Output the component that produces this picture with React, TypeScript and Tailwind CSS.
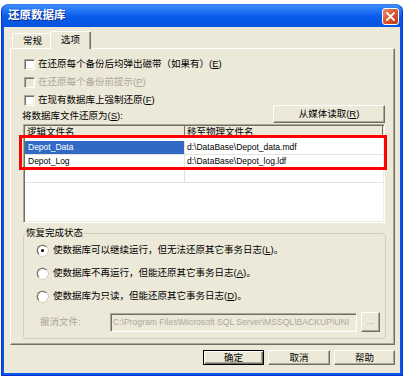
import type { ReactNode } from "react";

const font = "font-['Liberation_Sans','Noto_Sans_CJK_SC',sans-serif]";

// classic 3D edges
const raised =
  "border border-t-white border-l-white border-b-[#716F64] border-r-[#716F64] shadow-[inset_-1px_-1px_0_#ACA899]";
const sunken =
  "border border-t-[#ACA899] border-l-[#ACA899] border-b-white border-r-white shadow-[inset_1px_1px_0_#716F64,inset_-1px_-1px_0_#F1EFE2]";

function Check({ disabled }: { disabled?: boolean }) {
  return (
    <span
      className={`w-[11px] h-[11px] shrink-0 ${sunken} ${disabled ? "bg-[#ECE9D8]" : "bg-white"}`}
    />
  );
}

function Radio({ on }: { on?: boolean }) {
  return (
    <span className="relative w-[11px] h-[11px] shrink-0 rounded-full bg-white border border-t-[#716F64] border-l-[#716F64] border-b-white border-r-white shadow-[0_0_0_0.5px_#ACA899] flex items-center justify-center">
      {on && <span className="w-[3px] h-[3px] rounded-full bg-black" />}
    </span>
  );
}

function Btn({
  children,
  def,
  disabled,
  className = "",
}: {
  children: ReactNode;
  def?: boolean;
  disabled?: boolean;
  className?: string;
}) {
  return (
    <button
      className={`flex items-center justify-center bg-[#ECE9D8] text-[9.5px] leading-none ${
        def
          ? "border border-black shadow-[inset_1px_1px_0_white,inset_-1px_-1px_0_#716F64,inset_-2px_-2px_0_#ACA899]"
          : raised
      } ${disabled ? "text-[#ACA899]" : "text-black"} ${className}`}
    >
      {children}
    </button>
  );
}

const Key = ({ k }: { k: string }) => (
  <>
    (<u className="underline-offset-1">{k}</u>)
  </>
);

export default function App() {
  return (
    <div className={`w-[405px] h-[377px] bg-white pt-[4px] pl-[1px] overflow-hidden ${font}`}>
      <div className="w-[402px] h-[372px] flex flex-col rounded-t-[7px] bg-[#0A55E4] border border-[#0831D9] border-t-[#3A7EF0]">
        {/* title bar */}
        <div className="h-[22px] shrink-0 flex items-center justify-between pl-[6px] pr-[3px] rounded-t-[6px] bg-linear-to-b from-[#3C8CFB] via-[#0A5CEC] to-[#0553DF]">
          <span className="text-white font-bold text-[11.5px] leading-none [text-shadow:1px_1px_0_#0A2A8A]">
            还原数据库
          </span>
          <span className="w-[17px] h-[17px] rounded-[3px] border border-white bg-linear-to-br from-[#EA8B6C] via-[#D9532E] to-[#C23A17] flex items-center justify-center">
            <svg width="9" height="9" viewBox="0 0 9 9">
              <path d="M1 1 L8 8 M8 1 L1 8" stroke="white" strokeWidth="1.8" strokeLinecap="square" />
            </svg>
          </span>
        </div>

        {/* client area */}
        <div className="flex-1 mx-[2px] mb-[2px] bg-[#ECE9D8] flex flex-col pt-[4px] text-black text-[9.5px]">
          {/* tabs */}
          <div className="flex items-end h-[17px] pl-[8px]">
            <div className="w-[40px] h-[15px] rounded-tl-[2px] border-t border-l border-t-white border-l-white leading-[14px] text-center">
              常规
            </div>
            <div className="relative z-10 -ml-[2px] -mb-[1px] w-[41px] h-[18px] bg-[#ECE9D8] rounded-t-[2px] border-t border-l border-r border-t-white border-l-white border-r-[#716F64] shadow-[inset_-1px_0_0_#ACA899] leading-[15px] text-center">
              选项
            </div>
          </div>

          {/* panel */}
          <div className={`h-[297px] ml-[6px] mr-[5px] ${raised} pt-[6px] pl-[12px] pr-[9px] flex flex-col`}>
            <label className="h-[18px] flex items-center gap-[3px] ml-[1px]">
              <Check />
              <span>
                在还原每个备份后均弹出磁带（如果有）<Key k="E" />
              </span>
            </label>
            <label className="h-[18px] flex items-center gap-[3px] ml-[1px] text-[#ACA899]">
              <Check disabled />
              <span>
                在还原每个备份前提示<Key k="P" />
              </span>
            </label>
            <label className="h-[18px] flex items-center gap-[3px] ml-[1px]">
              <Check />
              <span>
                在现有数据库上强制还原<Key k="F" />
              </span>
            </label>

            <div className="-mt-[4px] flex items-end justify-between">
              <span className="leading-[12px] pb-[1px] -ml-[1px]">
                将数据库文件还原为<Key k="S" />:
              </span>
              <Btn className="w-[112px] h-[18px]">
                从媒体读取<Key k="R" />
              </Btn>
            </div>

            {/* file grid */}
            <div className="relative mt-[1px]">
              <div className={`h-[99px] bg-white ${sunken} p-[1px] flex flex-col`}>
                <div className="flex h-[11px] bg-[#ECE9D8] leading-[12px] overflow-hidden">
                  <div className="w-[160px] pl-[2px] border-r border-b border-r-[#716F64] border-b-[#716F64] overflow-hidden">
                    逻辑文件名
                  </div>
                  <div className="flex-1 pl-[2px] border-r border-b border-r-[#716F64] border-b-[#716F64] overflow-hidden">
                    移至物理文件名
                  </div>
                </div>
                <div className="h-[4px]" />
                {[
                  ["Depot_Data", "d:\\DataBase\\Depot_data.mdf"],
                  ["Depot_Log", "d:\\DataBase\\Depot_log.ldf"],
                  ["", ""],
                ].map(([name, path], i) => (
                  <div key={i} className="flex h-[14px] border-b border-[#E4E2DA] text-[8.5px] leading-[13px]">
                    <div
                      className={`w-[160px] pl-[3px] border-r border-[#E4E2DA] ${
                        i === 0 ? "bg-[#316AC5] text-white" : ""
                      }`}
                    >
                      {name}
                    </div>
                    <div className="flex-1 pl-[2px]">{path}</div>
                  </div>
                ))}
              </div>
              <div className="absolute left-[-4px] top-[11px] w-[368px] h-[35px] border-[3px] border-[#FF0000] pointer-events-none" />
            </div>

            {/* recovery state */}
            <fieldset className="mt-[4px] mr-[-1px] border border-[#D0D0BF] rounded-[3px] pb-[6px]">
              <legend className="leading-[12px] px-[1px] ml-[1px]">恢复完成状态</legend>
              <div className="pl-[13px]">
                <label className="h-[23px] flex items-center gap-[5px]">
                  <Radio on />
                  <span>
                    使数据库可以继续运行，但无法还原其它事务日志<Key k="L" />。
                  </span>
                </label>
                <label className="h-[23px] flex items-center gap-[5px]">
                  <Radio />
                  <span>
                    使数据库不再运行，但能还原其它事务日志<Key k="A" />。
                  </span>
                </label>
                <label className="h-[23px] flex items-center gap-[5px]">
                  <Radio />
                  <span>
                    使数据库为只读，但能还原其它事务日志<Key k="D" />。
                  </span>
                </label>
                <div className="mt-[4px] ml-[3px] flex items-center h-[20px]">
                  <span className="w-[70px] text-[#ACA899]">撤消文件:</span>
                  <div className={`w-[247px] h-[19px] ${sunken} bg-[#ECE9D8] overflow-hidden whitespace-nowrap text-[8.6px] leading-[17px] pl-[2px] text-[#ACA899]`}>
                    C:\Program Files\Microsoft SQL Server\MSSQL\BACKUP\UNI
                  </div>
                  <Btn disabled className="ml-[4px] w-[19px] h-[20px] text-[8px] pb-[3px]">
                    ...
                  </Btn>
                </div>
              </div>
            </fieldset>
          </div>

          {/* footer */}
          <div className="mt-[5px] flex justify-end gap-[4px] pr-[5px]">
            <Btn def className="w-[61px] h-[15px]">确定</Btn>
            <Btn className="w-[62px] h-[15px]">取消</Btn>
            <Btn className="w-[61px] h-[15px]">帮助</Btn>
          </div>
        </div>
      </div>
    </div>
  );
}
